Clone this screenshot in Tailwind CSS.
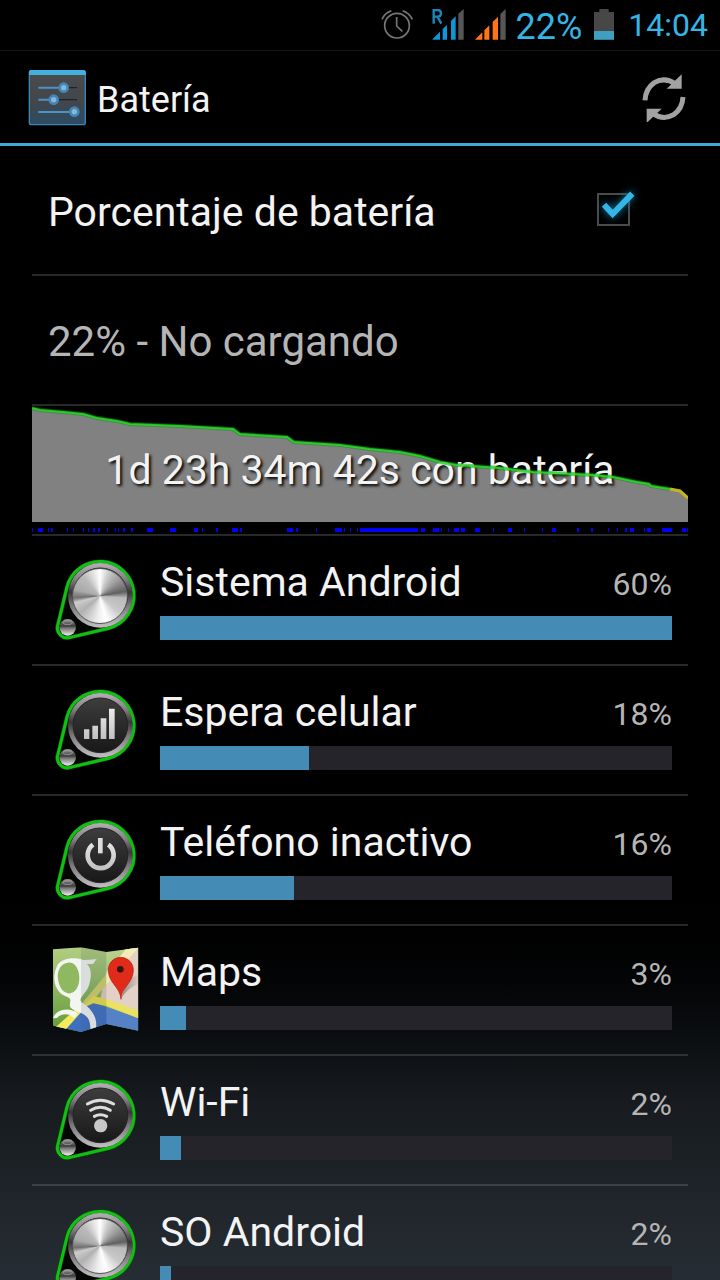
<!DOCTYPE html>
<html lang="es">
<head>
<meta charset="utf-8">
<meta name="viewport" content="width=device-width, initial-scale=1">
<title>Batería</title>
<script src="https://cdn.jsdelivr.net/npm/@tailwindcss/browser@4"></script>
</head>
<body class="bg-black">
<svg class="absolute h-0 w-0" aria-hidden="true">
  <defs>
    <linearGradient id="rim" x1="0" y1="0" x2="0" y2="1"><stop offset="0" stop-color="#b5b0b5"/><stop offset=".25" stop-color="#858085"/><stop offset=".45" stop-color="#383538"/><stop offset=".65" stop-color="#7a767a"/><stop offset="1" stop-color="#c4c1c4"/></linearGradient>
    <linearGradient id="face" x1="0" y1="0" x2="0" y2="1"><stop offset="0" stop-color="#3d3d3d"/><stop offset="1" stop-color="#181818"/></linearGradient>
    <linearGradient id="glyph" gradientUnits="userSpaceOnUse" x1="0" y1="100" x2="0" y2="200"><stop offset="0" stop-color="#ececec"/><stop offset="1" stop-color="#bdbdbd"/></linearGradient>
    <linearGradient id="ball" x1="0" y1="0" x2="0" y2="1"><stop offset="0" stop-color="#999"/><stop offset=".42" stop-color="#3c3c3c"/><stop offset=".55" stop-color="#777"/><stop offset="1" stop-color="#eee"/></linearGradient>
    <symbol id="belt" viewBox="0 0 360 330">
      <path d="M81 126A102 102 0 1 1 206 250L91 277A30 30 0 0 1 54 238Z" fill="#050705" stroke="#085808" stroke-width="12"/>
      <path d="M81 126A102 102 0 1 1 206 250L91 277A30 30 0 0 1 54 238Z" fill="none" stroke="#12c012" stroke-width="9"/>
      <circle cx="181" cy="151" r="97" fill="url(#rim)"/>
      <circle cx="181" cy="151" r="82" fill="url(#face)" stroke="#242424" stroke-width="3"/>
      <circle cx="83" cy="247" r="25" fill="url(#ball)"/>
      <ellipse cx="83" cy="233" rx="14" ry="6" fill="none" stroke="#aaa" stroke-width="2"/>
    </symbol>
  </defs>
</svg>
<div class="flex h-screen flex-col overflow-hidden bg-linear-to-b from-black from-67% via-[#171b1f] via-86% to-[#262d34] font-[Roboto,sans-serif] text-[#f3f3f3]">
  <div class="flex h-[51px] shrink-0 items-center justify-end border-b border-[#141414] bg-black pr-3 text-[#33b5e5]">
    <svg class="mr-[18px] h-8 w-8" viewBox="0 0 96 96" fill="none" stroke="#777" stroke-width="5"><circle cx="48" cy="50" r="37"/><path d="M47 24V51L64 67"/><path d="M3 31Q10 13 31 5M65 5Q86 13 94 31"/></svg>
    <svg class="mr-2 h-8 w-9" viewBox="0 0 108 96"><path d="M5 92V90L27 68V92ZM35 92V60L48 48V92ZM60 92V36L74 22V92Z" fill="#0d96d8"/><path d="M82 92V14L98 0V92Z" fill="#565656"/><path d="M8 44V3H19Q30 3 30 13T19 23H8M19 23L31 44" fill="none" stroke="#1689bd" stroke-width="7"/></svg>
    <svg class="mr-2 h-8 w-8" viewBox="0 0 96 96"><path d="M0 92L22 70V92ZM28 92V64L43 49V92ZM53 92V39L69 23V92Z" fill="#ff7417"/><path d="M76 92V15L92 0V92Z" fill="#565656"/></svg>
    <span class="mr-3 pt-1 text-4xl">22%</span>
    <svg class="mr-[14px] h-8 w-5" viewBox="0 0 60 96"><path d="M0 9H16V0H44V9H60V92H0Z" fill="#474747"/><path d="M0 66H60V92H0Z" fill="#3f9fc1"/></svg>
    <span class="text-[32px]">14:04</span>
  </div>
  <header class="flex h-[95px] shrink-0 items-center border-b-3 border-[#3fa9d8] bg-black pt-[2px] pr-8 pl-7">
    <svg class="mr-[10px] h-[58px] w-[59px] shrink-0" viewBox="0 0 177 174">
      <defs><linearGradient id="panel" x1="0" y1="0" x2="0" y2="1"><stop offset="0" stop-color="#4b4b4b"/><stop offset=".6" stop-color="#41474c"/><stop offset="1" stop-color="#2b4c66"/></linearGradient></defs>
      <rect x="4" y="5" width="168" height="162" rx="6" fill="url(#panel)" stroke="#3a86b9" stroke-width="4"/>
      <path d="M3 18V10Q3 3 10 3H166Q173 3 173 10V18Z" fill="#43b0e0"/>
      <path d="M106 56H147M76 92H147" stroke="#1b2228" stroke-width="4"/>
      <path d="M31 56H106M31 92H76M31 129H140" stroke="#4d93c3" stroke-width="6"/>
      <g fill="#8bb5d3" stroke="#3f87bd" stroke-width="8"><circle cx="107" cy="56" r="12"/><circle cx="77" cy="92" r="12"/><circle cx="139" cy="128" r="12"/></g>
    </svg>
    <h1 class="flex-1 pt-1 text-4xl">Batería</h1>
    <button class="h-12 w-12" type="button" aria-label="Actualizar">
      <svg class="h-12 w-12" viewBox="0 0 144 144"><g fill="none" stroke="#a2a2a2" stroke-width="15"><path d="M15 79Q17 44 43 26Q74 8 105 29"/><path d="M129 69Q127 104 101 122Q70 140 39 119"/></g><path d="M125 1V44H80ZM20 147V104H65Z" fill="#a2a2a2"/></svg>
    </button>
  </header>
  <main class="min-h-0 flex-1 overflow-y-auto px-8 [scrollbar-width:none]">
    <section class="text-[41px]/12">
      <div class="flex h-[130px] items-center justify-between border-b-2 border-[#282828] pr-14 pl-4">
        <label for="pct" class="pt-1">Porcentaje de batería</label>
        <span class="relative block h-9 w-9">
          <input id="pct" type="checkbox" checked class="mt-px ml-px block h-[33px] w-[33px] appearance-none border-2 border-[#4b4b4b]">
          <svg class="pointer-events-none absolute -top-2 left-0 h-12 w-12 drop-shadow-[0_0_4px_#0b7fa8]" viewBox="0 0 144 144"><path d="M97 30L112 22L96 50Z" fill="#000"/><path d="M24 62L50 90L109 29" fill="none" stroke="#33b5e5" stroke-width="18"/></svg>
        </span>
      </div>
      <p class="flex h-[130px] items-center border-b-2 border-[#282828] pt-1 pl-4 text-[42px] text-[#b5b5b5]">22% - No cargando</p>
      <div class="relative flex h-[130px] items-center justify-center border-b-2 border-[#282828]">
        <svg class="absolute inset-0 h-full w-full" viewBox="0 0 656 128" preserveAspectRatio="none">
          <path fill="#818181" d="M0 2L8 4L31 6L51 8L65 12L85 15L98 18L148 20L201 23L208 28L255 31L262 36L308 39L338 43L368 46L388 50L408 56L425 59L468 62L501 66L561 69L581 71L605 76L617 78L619 80L638 83L648 85L656 92V116H0Z"/>
          <path fill="#0000f2" d="M0 122h1v4h-1zM6 122h5v4h-5zM16 122h1v4h-1zM19 122h2v4h-2zM35 122h1v4h-1zM41 122h1v4h-1zM51 122h1v4h-1zM56 122h1v4h-1zM61 122h2v4h-2zM66 122h2v4h-2zM75 122h1v4h-1zM83 122h1v4h-1zM86 122h1v4h-1zM91 122h2v4h-2zM99 122h2v4h-2zM115 122h6v4h-6zM138 122h6v4h-6zM162 122h4v4h-4zM170 122h1v4h-1zM184 122h2v4h-2zM200 122h6v4h-6zM208 122h2v4h-2zM255 122h6v4h-6zM264 122h2v4h-2zM284 122h1v4h-1zM303 122h7v4h-7zM312 122h1v4h-1zM318 122h1v4h-1zM325 122h1v4h-1zM328 122h58v4h-58zM389 122h4v4h-4zM401 122h6v4h-6zM409 122h1v4h-1zM416 122h1v4h-1zM422 122h5v4h-5zM429 122h4v4h-4zM443 122h5v4h-5zM461 122h1v4h-1zM476 122h4v4h-4zM492 122h1v4h-1zM510 122h1v4h-1zM520 122h4v4h-4zM545 122h2v4h-2zM559 122h2v4h-2zM576 122h1v4h-1zM585 122h1v4h-1zM593 122h2v4h-2zM598 122h4v4h-4zM612 122h1v4h-1zM615 122h4v4h-4zM630 122h10v4h-10zM650 122h4v4h-4zM655 122h1v4h-1z"/>
        </svg>
        <p class="relative [text-shadow:2px_2px_3px_#000]">1d 23h 34m 42s con batería</p>
        <svg class="absolute inset-0 h-full w-full" viewBox="0 0 656 128" preserveAspectRatio="none" fill="none">
          <path stroke="#00a000" stroke-opacity=".5" stroke-width="4" d="M0 2L8 4L31 6L51 8L65 12L85 15L98 18L148 20L201 23L208 28L255 31L262 36L308 39L338 43L368 46L388 50L408 56L425 59L468 62L501 66L561 69L581 71L605 76L617 78L619 80L638 83"/>
          <path stroke="#2fdd2f" stroke-opacity=".8" stroke-width="2" d="M0 2L8 4L31 6L51 8L65 12L85 15L98 18L148 20L201 23L208 28L255 31L262 36L308 39L338 43L368 46L388 50L408 56L425 59L468 62L501 66L561 69L581 71L605 76L617 78L619 80L638 83"/>
          <path stroke="#c5b51c" stroke-width="3" d="M638 83L648 85L656 92"/>
        </svg>
      </div>
    </section>
    <ul>
      <li class="flex h-[130px] items-center border-b-2 border-[#282828] pr-4 pl-2">
        <div class="relative h-[110px] w-[120px] shrink-0">
          <svg class="h-full w-full"><use href="#belt"/></svg>
          <span class="absolute top-[23px] left-8 h-14 w-14 rounded-full border border-[#555] bg-[conic-gradient(#fff,#ccc_20deg,#999_50deg,#606060_80deg,#bbb_95deg,#c8c8c8_130deg,#fff_165deg,#eee_185deg,#b0b0b0_230deg,#ccc_255deg,#707070_266deg,#aaa_285deg,#bbb_320deg,#fff)]"></span>
        </div>
        <div class="min-w-0 flex-1">
          <div class="flex items-start justify-between"><h2 class="text-[41px]/11">Sistema Android</h2><span class="pt-1 text-[32px]/10 text-[#b5b5b5]">60%</span></div>
          <div class="mt-3 h-6 bg-[#25242a]"><div class="h-full bg-[#448bb6]" style="width:100%"></div></div>
        </div>
      </li>
      <li class="flex h-[130px] items-center border-b-2 border-[#282828] pr-4 pl-2">
        <div class="relative h-[110px] w-[120px] shrink-0">
          <svg class="h-full w-full" viewBox="0 0 360 330"><use href="#belt"/><path fill="url(#glyph)" d="M132 163h16v29h-16zM157 152h17v40h-17zM182 130h17v62h-17zM207 101h17v91h-17z"/></svg>
        </div>
        <div class="min-w-0 flex-1">
          <div class="flex items-start justify-between"><h2 class="text-[41px]/11">Espera celular</h2><span class="pt-1 text-[32px]/10 text-[#b5b5b5]">18%</span></div>
          <div class="mt-3 h-6 bg-[#25242a]"><div class="h-full bg-[#448bb6]" style="width:29.1%"></div></div>
        </div>
      </li>
      <li class="flex h-[130px] items-center border-b-2 border-[#282828] pr-4 pl-2">
        <div class="relative h-[110px] w-[120px] shrink-0">
          <svg class="h-full w-full" viewBox="0 0 360 330"><use href="#belt"/><path d="M159 119A39 39 0 1 0 205 119" fill="none" stroke="url(#glyph)" stroke-width="14"/><path d="M181 99V145" fill="none" stroke="#ddd" stroke-width="14"/></svg>
        </div>
        <div class="min-w-0 flex-1">
          <div class="flex items-start justify-between"><h2 class="text-[41px]/11">Teléfono inactivo</h2><span class="pt-1 text-[32px]/10 text-[#b5b5b5]">16%</span></div>
          <div class="mt-3 h-6 bg-[#25242a]"><div class="h-full bg-[#448bb6]" style="width:26.2%"></div></div>
        </div>
      </li>
      <li class="flex h-[130px] items-center border-b-2 border-[#2f3132] pr-4 pl-2">
        <div class="relative h-[110px] w-[120px] shrink-0">
          <svg class="h-full w-full" viewBox="0 0 360 330">
            <defs>
              <clipPath id="sheet"><path d="M39 43L123 37L199 51L295 38V287L199 267L123 291L39 272Z"/></clipPath>
              <linearGradient id="land" x1="0" y1="0" x2="0" y2="1"><stop offset="0" stop-color="#b5cf83"/><stop offset="1" stop-color="#5f9a35"/></linearGradient>
              <linearGradient id="shade"><stop offset="0" stop-color="#777" stop-opacity=".75"/><stop offset="1" stop-color="#777" stop-opacity="0"/></linearGradient>
            </defs>
            <g clip-path="url(#sheet)">
              <path d="M30 30H300V300H30Z" fill="url(#land)"/>
              <path d="M199 110L270 35H300V250L180 195Z" fill="#e0cabf"/>
              <path d="M70 291L130 205L165 205L300 250V300H70Z" fill="#3f70c0"/>
              <path d="M30 292L125 206L199 118L262 36H297L199 150L160 195L123 222L75 285Z" fill="#d3d06a"/>
              <path d="M262 36H297L199 150V118Z" fill="#efeab0"/>
              <path d="M30 292L112 220L123 232L76 285Z" fill="#f3ea5c"/>
              <path d="M123 222L160 183L199 192L300 229V252L199 213L160 205Z" fill="#e9df4b"/>
              <path d="M170 72Q148 75 130 75C110 66 62 66 50 95C34 130 45 171 77 184C103 192 83 206 92 218C112 239 155 225 151 290H166C178 247 150 217 126 203C111 189 139 178 147 151C158 112 151 98 141 87H159Z" fill="#f3f5f1"/>
              <path d="M84 83C64 85 50 105 54 132C57 159 72 177 91 175C112 170 121 145 117 117C113 95 101 81 84 83Z" fill="#8fb960"/>
              <path d="M39 250C46 223 91 213 113 237L103 250C87 231 60 237 51 249Z" fill="#f3f5f1"/>
              <path d="M123 30L199 45V300L123 295Z" fill="#40506a" fill-opacity=".14"/>
              <path d="M199 45L300 30V300L199 275Z" fill="#fff" fill-opacity=".12"/>
              <path d="M244 190L262 135L300 116V145Q263 156 244 190Z" fill="url(#shade)"/>
            </g>
            <path d="M243 193C241 155 205 145 205 105C205 83 222 67 242 67S280 83 280 105C280 145 244 155 243 193Z" fill="#e02b1b" stroke="#b51b10" stroke-width="2"/>
            <circle cx="241" cy="103" r="10" fill="#391412"/>
          </svg>
        </div>
        <div class="min-w-0 flex-1">
          <div class="flex items-start justify-between"><h2 class="text-[41px]/11">Maps</h2><span class="pt-1 text-[32px]/10 text-[#b5b5b5]">3%</span></div>
          <div class="mt-3 h-6 bg-[#25242a]"><div class="h-full bg-[#448bb6]" style="width:5.1%"></div></div>
        </div>
      </li>
      <li class="flex h-[130px] items-center border-b-2 border-[#3c4144] pr-4 pl-2">
        <div class="relative h-[110px] w-[120px] shrink-0">
          <svg class="h-full w-full" viewBox="0 0 360 330"><use href="#belt"/><g fill="none" stroke="#ddd" stroke-width="9" stroke-linecap="round"><path d="M142 117Q181 94 221 117M152 136Q181 118 211 136M163 154Q181 144 200 154"/></g><circle cx="182" cy="182" r="20" fill="#c8c8c8"/></svg>
        </div>
        <div class="min-w-0 flex-1">
          <div class="flex items-start justify-between"><h2 class="text-[41px]/11">Wi-Fi</h2><span class="pt-1 text-[32px]/10 text-[#b5b5b5]">2%</span></div>
          <div class="mt-3 h-6 bg-[#25242a]"><div class="h-full bg-[#448bb6]" style="width:4.1%"></div></div>
        </div>
      </li>
      <li class="flex h-[130px] items-center border-b-2 border-[#3c4144] pr-4 pl-2">
        <div class="relative h-[110px] w-[120px] shrink-0">
          <svg class="h-full w-full"><use href="#belt"/></svg>
          <span class="absolute top-[23px] left-8 h-14 w-14 rounded-full border border-[#555] bg-[conic-gradient(#fff,#ccc_20deg,#999_50deg,#606060_80deg,#bbb_95deg,#c8c8c8_130deg,#fff_165deg,#eee_185deg,#b0b0b0_230deg,#ccc_255deg,#707070_266deg,#aaa_285deg,#bbb_320deg,#fff)]"></span>
        </div>
        <div class="min-w-0 flex-1">
          <div class="flex items-start justify-between"><h2 class="text-[41px]/11">SO Android</h2><span class="pt-1 text-[32px]/10 text-[#b5b5b5]">2%</span></div>
          <div class="mt-3 h-6 bg-[#25242a]"><div class="h-full bg-[#448bb6]" style="width:2.1%"></div></div>
        </div>
      </li>
    </ul>
  </main>
</div>
</body>
</html>
